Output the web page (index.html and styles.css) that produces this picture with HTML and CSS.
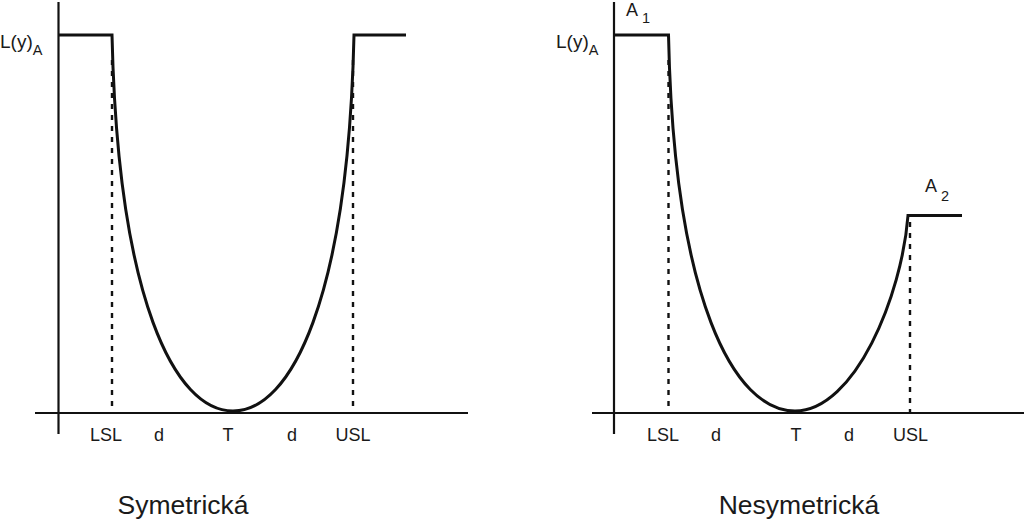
FILE: index.html
```html
<!DOCTYPE html>
<html lang="cs">
<head>
<meta charset="utf-8">
<title>Ztrátová funkce</title>
<link rel="stylesheet" href="styles.css">
</head>
<body>
<main class="page">
<svg class="chart" width="1024" height="522" viewBox="0 0 1024 522" xmlns="http://www.w3.org/2000/svg">
  <!-- Left chart: symmetric -->
  <g class="panel">
    <line class="axis" x1="58.5" y1="2" x2="58.5" y2="434"/>
    <line class="axis" x1="35" y1="413" x2="468" y2="413"/>
    <line class="dots" x1="112" y1="60" x2="112" y2="412"/>
    <line class="dots" x1="353" y1="60" x2="353" y2="412"/>
    <path class="curve" d="M58 35 H112 C118 300 175 411 233 411 C291 411 348 300 354 35 H406"/>
    <text class="lbl big" x="0" y="48">L(y)<tspan class="sub" dy="7">A</tspan></text>
    <text class="lbl mid" x="106" y="441">LSL</text>
    <text class="lbl mid" x="159" y="441">d</text>
    <text class="lbl mid" x="228" y="441">T</text>
    <text class="lbl mid" x="292" y="441">d</text>
    <text class="lbl mid" x="353" y="441">USL</text>
    <text class="title mid" x="183" y="514">Symetrická</text>
  </g>
  <!-- Right chart: asymmetric -->
  <g class="panel">
    <line class="axis" x1="614" y1="2" x2="614" y2="434"/>
    <line class="axis" x1="592" y1="413" x2="1024" y2="413"/>
    <line class="dots" x1="668.5" y1="60" x2="668.5" y2="412"/>
    <line class="dots" x1="910" y1="222" x2="910" y2="412"/>
    <path class="curve" d="M614 35 H668.5 C674 300 734 411 795 411 C855 411 902 295 908 215.5 H962"/>
    <text class="lbl" x="626" y="16">A<tspan class="sub" dx="4" dy="7">1</tspan></text>
    <text class="lbl big" x="556" y="48">L(y)<tspan class="sub" dy="7">A</tspan></text>
    <text class="lbl" x="925" y="192">A<tspan class="sub" dx="4" dy="9">2</tspan></text>
    <text class="lbl mid" x="663" y="441">LSL</text>
    <text class="lbl mid" x="716" y="441">d</text>
    <text class="lbl mid" x="796" y="441">T</text>
    <text class="lbl mid" x="849" y="441">d</text>
    <text class="lbl mid" x="910.5" y="441">USL</text>
    <text class="title mid" x="799" y="514">Nesymetrická</text>
  </g>
</svg>
</main>
</body>
</html>
```
FILE: styles.css
```css
html, body {
  margin: 0;
  padding: 0;
  background: #ffffff;
}

.page {
  width: 1024px;
  height: 522px;
  overflow: hidden;
}

.chart {
  display: block;
}

.axis {
  stroke: #111111;
  stroke-width: 2.2;
  fill: none;
}

.dots {
  stroke: #111111;
  stroke-width: 2.4;
  stroke-dasharray: 5 6;
  fill: none;
}

.curve {
  stroke: #111111;
  stroke-width: 3;
  fill: none;
  stroke-linejoin: miter;
}

.lbl {
  font-family: "Liberation Sans", Arial, sans-serif;
  font-size: 18px;
  fill: #1a1a1a;
}

.big {
  font-size: 19px;
}

.sub {
  font-size: 14.5px;
}

.mid {
  text-anchor: middle;
}

.title {
  font-family: "Liberation Sans", Arial, sans-serif;
  font-size: 26.5px;
  fill: #1a1a1a;
}
```
